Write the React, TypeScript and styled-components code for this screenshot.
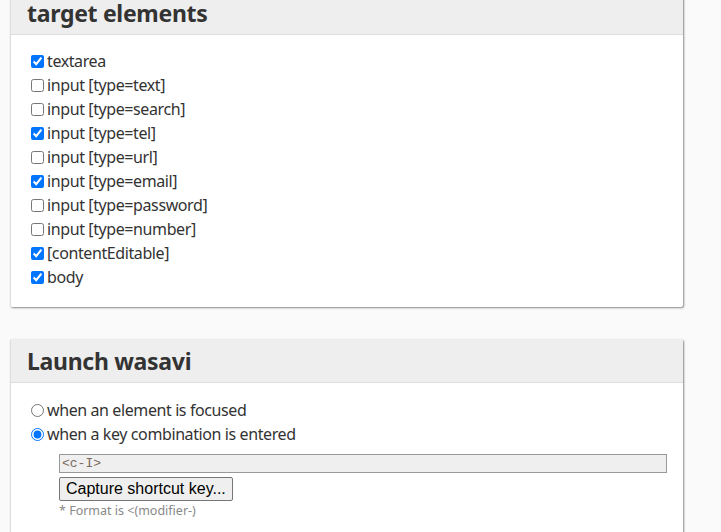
import React from "react";
import styled, { createGlobalStyle } from "styled-components";

const Global = createGlobalStyle`
  html, body { margin: 0; padding: 0; background: #fafafa; }
  body { font-family: "Noto Sans", "Open Sans", sans-serif; color: #333; overflow: hidden; }
`;

const Page = styled.div`
  padding: 0 0 0 10px;
  margin-top: -9px;
  display: flex;
  flex-direction: column;
  gap: 32px;
`;

const Card = styled.section`
  width: 672px;
  background: #fff;
  border-left: 1px solid #ddd;
  box-shadow: 1px 1px 2px rgba(0, 0, 0, 0.45);
  border-radius: 2px;
`;

const CardHeader = styled.h2`
  margin: 0;
  height: 44px;
  box-sizing: border-box;
  padding: 0 16px;
  background: #eee;
  border-bottom: 1px solid #ddd;
  font-size: 23px;
  letter-spacing: -0.3px;
  font-weight: bold;
  line-height: 44px;
  color: #333;
`;

const CardBody = styled.div<{ $top?: number }>`
  padding: ${(p) => p.$top ?? 14}px 16px 18px 16px;
`;

const Row = styled.label`
  display: flex;
  align-items: center;
  height: 24px;
  font-size: 16px;
  letter-spacing: -0.4px;
  color: #333;
  input { margin: 0 3px 0 4px; }
`;

const Indent = styled.div`
  margin: 8px 0 0 32px;
  display: flex;
  flex-direction: column;
  align-items: flex-start;
`;

const KeyInput = styled.input`
  box-sizing: border-box;
  width: 100%;
  height: 19px;
  margin: 0;
  padding: 0 2px;
  border: 1px solid #999;
  background: #efefef;
  color: #7a6a60;
  font-family: "Liberation Mono", monospace;
  font-size: 13px;
  outline: none;
`;

const CaptureButton = styled.button`
  margin-top: 4px;
  height: 24px;
  padding: 0 6px;
  font-family: "Liberation Sans", Arial, sans-serif;
  font-size: 16px;
  color: #000;
  background: #efefef;
  border: 1px solid #767676;
  border-radius: 2px;
`;

const Note = styled.div`
  margin-top: 1px;
  font-size: 12.5px;
  color: #888;
`;

const targets: [string, boolean][] = [
  ["textarea", true],
  ["input [type=text]", false],
  ["input [type=search]", false],
  ["input [type=tel]", true],
  ["input [type=url]", false],
  ["input [type=email]", true],
  ["input [type=password]", false],
  ["input [type=number]", false],
  ["[contentEditable]", true],
  ["body", true],
];

export default function App() {
  return (
    <>
      <Global />
      <Page>
        <Card>
          <CardHeader>target elements</CardHeader>
          <CardBody>
            {targets.map(([label, checked]) => (
              <Row key={label}>
                <input type="checkbox" defaultChecked={checked} />
                {label}
              </Row>
            ))}
          </CardBody>
        </Card>
        <Card>
          <CardHeader>Launch wasavi</CardHeader>
          <CardBody $top={15}>
            <Row>
              <input type="radio" name="launch" />
              when an element is focused
            </Row>
            <Row>
              <input type="radio" name="launch" defaultChecked />
              when a key combination is entered
            </Row>
            <Indent>
              <KeyInput readOnly value="<c-I>" />
              <CaptureButton>Capture shortcut key...</CaptureButton>
              <Note>* Format is &lt;(modifier-)</Note>
            </Indent>
          </CardBody>
        </Card>
      </Page>
    </>
  );
}
